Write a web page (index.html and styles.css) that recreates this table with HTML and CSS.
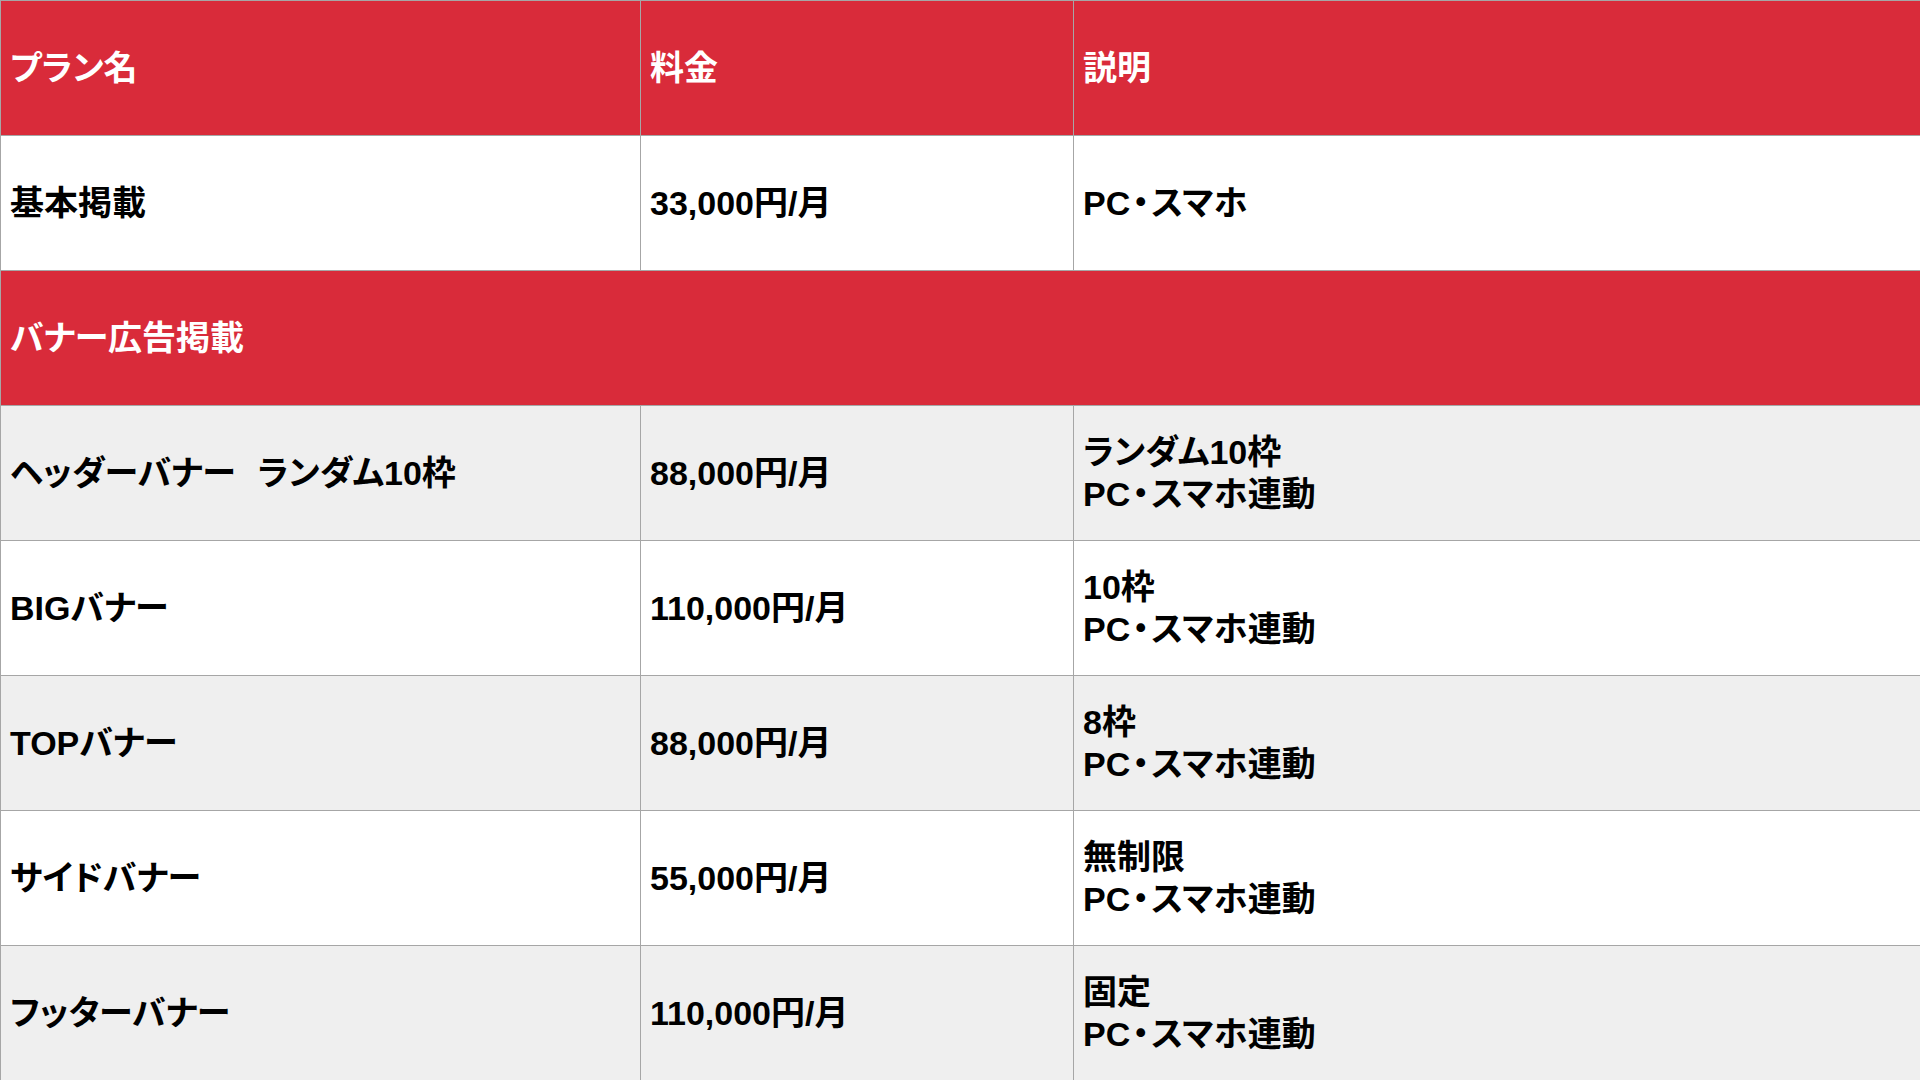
FILE: index.html
```html
<!DOCTYPE html>
<html lang="ja">
<head>
<meta charset="utf-8">
<title>料金プラン</title>
<link rel="stylesheet" href="styles.css">
</head>
<body>
<table class="plans">
  <colgroup>
    <col class="c-name">
    <col class="c-price">
    <col class="c-desc">
  </colgroup>
  <tr class="row red">
    <td>プラン名</td>
    <td>料金</td>
    <td>説明</td>
  </tr>
  <tr class="row white">
    <td>基本掲載</td>
    <td>33,000円/月</td>
    <td>PC<span class="dot">・</span>スマホ</td>
  </tr>
  <tr class="row red">
    <td colspan="3">バナー広告掲載</td>
  </tr>
  <tr class="row gray">
    <td>ヘッダーバナー<span class="gap">　</span>ランダム10枠</td>
    <td>88,000円/月</td>
    <td>ランダム10枠<br>PC<span class="dot">・</span>スマホ連動</td>
  </tr>
  <tr class="row white">
    <td>BIGバナー</td>
    <td>110,000円/月</td>
    <td>10枠<br>PC<span class="dot">・</span>スマホ連動</td>
  </tr>
  <tr class="row gray">
    <td>TOPバナー</td>
    <td>88,000円/月</td>
    <td>8枠<br>PC<span class="dot">・</span>スマホ連動</td>
  </tr>
  <tr class="row white">
    <td>サイドバナー</td>
    <td>55,000円/月</td>
    <td>無制限<br>PC<span class="dot">・</span>スマホ連動</td>
  </tr>
  <tr class="row gray">
    <td>フッターバナー</td>
    <td>110,000円/月</td>
    <td>固定<br>PC<span class="dot">・</span>スマホ連動</td>
  </tr>
</table>
</body>
</html>
```
FILE: styles.css
```css
html, body {
  margin: 0;
  padding: 0;
  background: #ffffff;
}
.plans {
  width: 1920px;
  border-collapse: collapse;
  table-layout: fixed;
  font-family: "Liberation Sans", "Noto Sans CJK JP", sans-serif;
  font-weight: 700;
  font-size: 34px;
  line-height: 42px;
  color: #000000;
  font-feature-settings: "palt";
}
.c-name { width: 640px; }
.c-price { width: 433px; }
.c-desc { width: 847px; }
.plans td {
  height: 135px;
  padding: 0 9px;
  border: 1px solid #a6a6a6;
  vertical-align: middle;
  box-sizing: border-box;
}
.red td {
  background: #d92b3a;
  color: #ffffff;
}
.white td { background: #ffffff; }
.gray td { background: #efefef; }
.dot {
  margin: 0 2px;
}
.gap {
  display: inline-block;
  width: 22px;
}
```
